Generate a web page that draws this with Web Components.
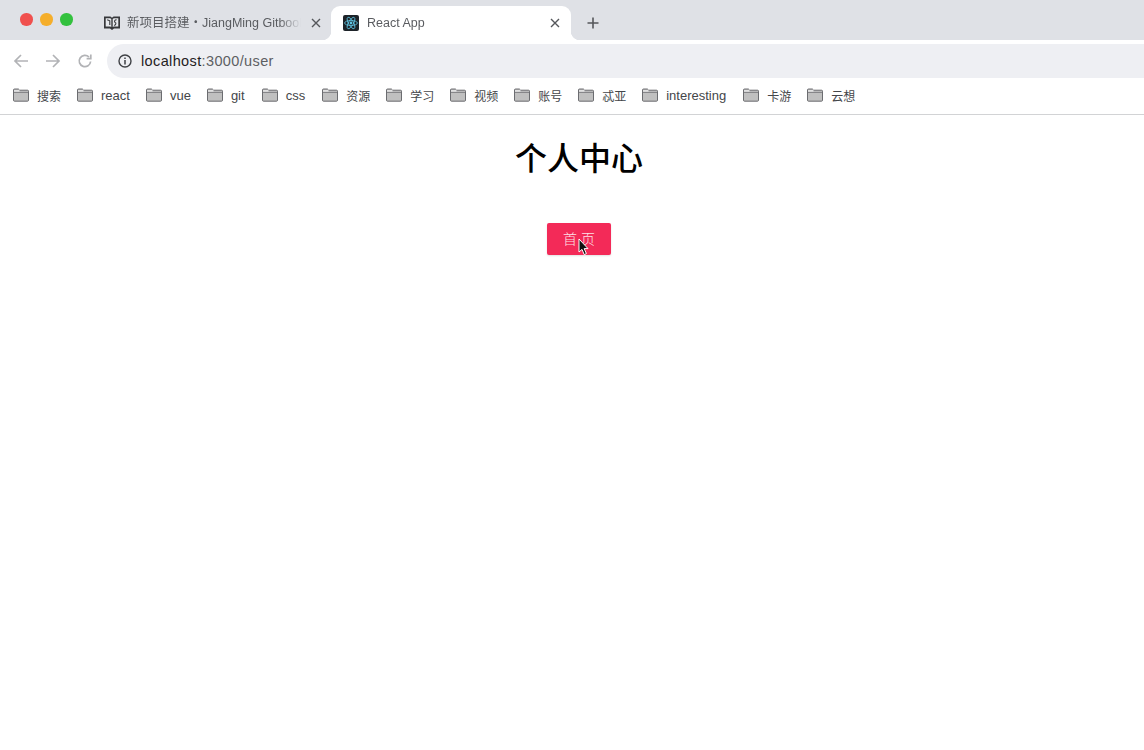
<!DOCTYPE html>
<html lang="zh">
<head>
<meta charset="utf-8">
<title>React App</title>
<style>
  html, body { margin: 0; height: 100%; background: #fff; overflow: hidden; }
  body { font-family: "Liberation Sans", "Noto Sans CJK SC", sans-serif; }
</style>
</head>
<body>
<browser-window>
  <browser-tab slot="tabs" title-text="新项目搭建・JiangMing Gitbook" icon="book" style="width:239px;padding-right:8px"></browser-tab>
  <browser-tab slot="tabs" title-text="React App" icon="react" active style="width:240px"></browser-tab>
  <bookmark-item slot="bookmarks" cjk>搜索</bookmark-item>
  <bookmark-item slot="bookmarks">react</bookmark-item>
  <bookmark-item slot="bookmarks">vue</bookmark-item>
  <bookmark-item slot="bookmarks" style="margin-right:1px">git</bookmark-item>
  <bookmark-item slot="bookmarks" style="margin-right:1px">css</bookmark-item>
  <bookmark-item slot="bookmarks" cjk>资源</bookmark-item>
  <bookmark-item slot="bookmarks" cjk>学习</bookmark-item>
  <bookmark-item slot="bookmarks" cjk>视频</bookmark-item>
  <bookmark-item slot="bookmarks" cjk>账号</bookmark-item>
  <bookmark-item slot="bookmarks" cjk>忒亚</bookmark-item>
  <bookmark-item slot="bookmarks" style="margin-right:1px">interesting</bookmark-item>
  <bookmark-item slot="bookmarks" cjk>卡游</bookmark-item>
  <bookmark-item slot="bookmarks" cjk>云想</bookmark-item>
  <user-page>
    <app-button>首 页</app-button>
  </user-page>
</browser-window>

<script>
const FONT = '"Liberation Sans", "Noto Sans CJK SC", sans-serif';

const ICONS = {
  book: `<svg width="16" height="16" viewBox="0 0 16 16">
    <path d="M0 1.6 H6.4 L8 2.8 L9.6 1.6 H16 V13.4 H10 L8 15 L6 13.4 H0 Z" fill="#37383b"/>
    <path d="M1.7 3.2 H6.2 L7.3 4 V12 L6.2 11.4 H1.7 Z M14.3 3.2 H9.8 L8.7 4 V12 L9.8 11.4 H14.3 Z" fill="#e6e8ec"/>
    <path d="M3.2 4.8 L5.8 5.8 V10 M12.6 4.8 C10.4 4.8 10 6.8 11.2 7.4 C12.4 7.9 12 9.6 10.2 10.4" fill="none" stroke="#37383b" stroke-width="1.1"/>
  </svg>`,
  react: `<svg width="16" height="16" viewBox="0 0 16 16">
    <rect width="16" height="16" rx="2" fill="#1d2328"/>
    <g fill="none" stroke="#5fc4e2" stroke-width=".8">
      <ellipse cx="8" cy="8" rx="6.4" ry="2.5"/>
      <ellipse cx="8" cy="8" rx="6.4" ry="2.5" transform="rotate(60 8 8)"/>
      <ellipse cx="8" cy="8" rx="6.4" ry="2.5" transform="rotate(120 8 8)"/>
    </g>
    <circle cx="8" cy="8" r="1.4" fill="#5fc4e2"/>
  </svg>`,
};

class BrowserTab extends HTMLElement {
  constructor() {
    super();
    this.attachShadow({ mode: "open" });
  }

  connectedCallback() {
    const title = this.getAttribute("title-text");
    const icon = ICONS[this.getAttribute("icon")];
    this.shadowRoot.innerHTML = `
      <style>
        :host {
          display: flex;
          align-items: center;
          box-sizing: border-box;
          height: 34px;
          padding: 0 9px 0 12px;
          gap: 8px;
          position: relative;
          color: #5a5c60;
          font: 12.5px ${FONT};
        }
        :host([active]) {
          background: #fff;
          border-radius: 9px 9px 0 0;
        }
        :host([active])::before, :host([active])::after {
          content: "";
          position: absolute;
          bottom: 0;
          width: 9px;
          height: 9px;
        }
        :host([active])::before {
          left: -9px;
          background: radial-gradient(circle at 0 0, transparent 9px, #fff 9.5px);
        }
        :host([active])::after {
          right: -9px;
          background: radial-gradient(circle at 100% 0, transparent 9px, #fff 9.5px);
        }
        svg { flex: none; display: block; }
        .title {
          flex: 1;
          min-width: 0;
          height: 16px;
          line-height: 16px;
          white-space: nowrap;
          overflow: hidden;
          margin-left: -1px;
          -webkit-mask-image: linear-gradient(to left, transparent 0, #000 22px);
        }
        :host([active]) .title { margin-left: 0; }
        .close {
          flex: none;
          width: 14px;
          height: 14px;
        }
        .close path { stroke: #55575b; stroke-width: 1.4; }
      </style>
      ${icon}
      <span class="title">${title}</span>
      <svg class="close" viewBox="0 0 14 14"><path d="M3 3 L11 11 M11 3 L3 11"/></svg>
    `;
  }
}
customElements.define("browser-tab", BrowserTab);

class BookmarkItem extends HTMLElement {
  constructor() {
    super();
    this.attachShadow({ mode: "open" });
    this.shadowRoot.innerHTML = `
      <style>
        :host {
          display: flex;
          align-items: center;
          gap: 8px;
          color: #44464a;
          font: 13px ${FONT};
        }
        :host([cjk]) { font-size: 12px; }
        svg { display: block; flex: none; }
      </style>
      <svg width="16" height="14" viewBox="0 0 16 14">
        <path d="M.5 12.2 V2 Q.5 1 1.5 1 H5.4 L6.6 2.2 H14.5 Q15.5 2.2 15.5 3.2 V12.2 Q15.5 13.2 14.5 13.2 H1.5 Q.5 13.2 .5 12.2 Z" fill="#c0c0c0" stroke="#5e5f63" stroke-width=".9"/>
        <path d="M1 2.2 H6.4 L6.6 3.8 H15 V4.2 H1 Z" fill="#ececec"/>
        <path d="M1 4.3 H15" stroke="#5e5f63" stroke-width=".8" fill="none"/>
      </svg>
      <slot></slot>
    `;
  }
}
customElements.define("bookmark-item", BookmarkItem);

class AppButton extends HTMLElement {
  constructor() {
    super();
    this.attachShadow({ mode: "open" });
    this.shadowRoot.innerHTML = `
      <style>
        :host { display: inline-block; }
        button {
          display: block;
          width: 64px;
          height: 32px;
          padding: 0 0 2px;
          border: 0;
          border-radius: 2px;
          background: #f32a58;
          box-shadow: 0 1px 2px rgba(0, 0, 0, .12);
          color: rgba(255, 255, 255, .88);
          font: 300 14px ${FONT};
        }
      </style>
      <button><slot></slot></button>
    `;
  }
}
customElements.define("app-button", AppButton);

class UserPage extends HTMLElement {
  constructor() {
    super();
    this.attachShadow({ mode: "open" });
    this.shadowRoot.innerHTML = `
      <style>
        :host {
          display: block;
          width: 1158px;
          text-align: center;
          color: #000;
          font-family: ${FONT};
        }
        h1 {
          margin: 0;
          padding-top: 22px;
          font-size: 32px;
          line-height: 44px;
          font-weight: 500;
        }
        .action {
          display: inline-block;
          position: relative;
          margin-top: 42px;
        }
        .cursor { position: absolute; left: 31px; top: 15px; }
      </style>
      <h1>个人中心</h1>
      <div class="action">
        <slot></slot>
        <svg class="cursor" width="12" height="18" viewBox="0 0 12 18">
          <path d="M1 1 V14 L4 11.4 L6.2 16.6 L8.4 15.6 L6.2 10.6 H10 Z" fill="#111" stroke="#fff" stroke-width="1"/>
        </svg>
      </div>
    `;
  }
}
customElements.define("user-page", UserPage);

class BrowserWindow extends HTMLElement {
  constructor() {
    super();
    this.attachShadow({ mode: "open" });
    this.shadowRoot.innerHTML = `
      <style>
        :host {
          display: flex;
          flex-direction: column;
          width: 1144px;
          height: 750px;
          overflow: hidden;
          font-family: ${FONT};
        }
        .strip {
          display: flex;
          align-items: flex-end;
          flex: none;
          height: 40px;
          background: #dfe1e6;
        }
        .lights {
          display: flex;
          gap: 7.5px;
          align-self: flex-start;
          box-sizing: border-box;
          width: 92px;
          flex: none;
          padding: 13px 0 0 20px;
        }
        .lights i { width: 12.5px; height: 12.5px; border-radius: 50%; }
        .tabs { display: flex; }
        .plus { display: block; margin: 0 0 10px 15px; }
        .toolbar {
          display: flex;
          align-items: center;
          flex: none;
          box-sizing: border-box;
          height: 38px;
          padding: 4px 0 0 13px;
          background: #fff;
          overflow: hidden;
        }
        .nav { display: flex; gap: 16px; flex: none; }
        .nav svg { display: block; }
        .omnibox {
          display: flex;
          align-items: center;
          gap: 9px;
          flex: none;
          width: 1100px;
          height: 34px;
          margin-left: 14px;
          padding-left: 11px;
          border-radius: 17px;
          background: #eeeff3;
          box-sizing: border-box;
          color: #5d5f63;
          font-size: 14.5px;
          letter-spacing: .37px;
        }
        .omnibox b { font-weight: 400; color: #1f2022; }
        .bookmarks {
          display: flex;
          align-items: center;
          gap: 16px;
          flex: none;
          box-sizing: border-box;
          height: 37px;
          padding: 0 0 2px 13px;
          border-bottom: 1px solid #d2d3d5;
          background: #fff;
        }
      </style>
      <div class="strip">
        <div class="lights">
          <i style="background:#f0504e"></i>
          <i style="background:#f5ae2b"></i>
          <i style="background:#33c13e"></i>
        </div>
        <div class="tabs"><slot name="tabs"></slot></div>
        <svg class="plus" width="14" height="14" viewBox="0 0 14 14">
          <path d="M7 1.5 V12.5 M1.5 7 H12.5" stroke="#55575b" stroke-width="1.6" fill="none"/>
        </svg>
      </div>
      <div class="toolbar">
        <div class="nav">
          <svg width="16" height="16" viewBox="0 0 16 16"><path d="M15 8 H2 M8 2 L2 8 L8 14" fill="none" stroke="#b2b3b6" stroke-width="1.7"/></svg>
          <svg width="16" height="16" viewBox="0 0 16 16"><path d="M1 8 H14 M8 2 L14 8 L8 14" fill="none" stroke="#b2b3b6" stroke-width="1.7"/></svg>
          <svg width="16" height="16" viewBox="0 0 16 16"><path d="M13.6 8.5 A5.7 5.7 0 1 1 12 4 M13.8 1.4 V5.6 H9.6" fill="none" stroke="#b2b3b6" stroke-width="1.7"/></svg>
        </div>
        <div class="omnibox">
          <svg width="14" height="14" viewBox="0 0 14 14">
            <circle cx="7" cy="7" r="6" fill="none" stroke="#3f4145" stroke-width="1.4"/>
            <path d="M7 6 V10.4 M7 3.4 V5" stroke="#3f4145" stroke-width="1.5" fill="none"/>
          </svg>
          <span><b>localhost</b>:3000/user</span>
        </div>
      </div>
      <div class="bookmarks"><slot name="bookmarks"></slot></div>
      <slot></slot>
    `;
  }
}
customElements.define("browser-window", BrowserWindow);
</script>
</body>
</html>
